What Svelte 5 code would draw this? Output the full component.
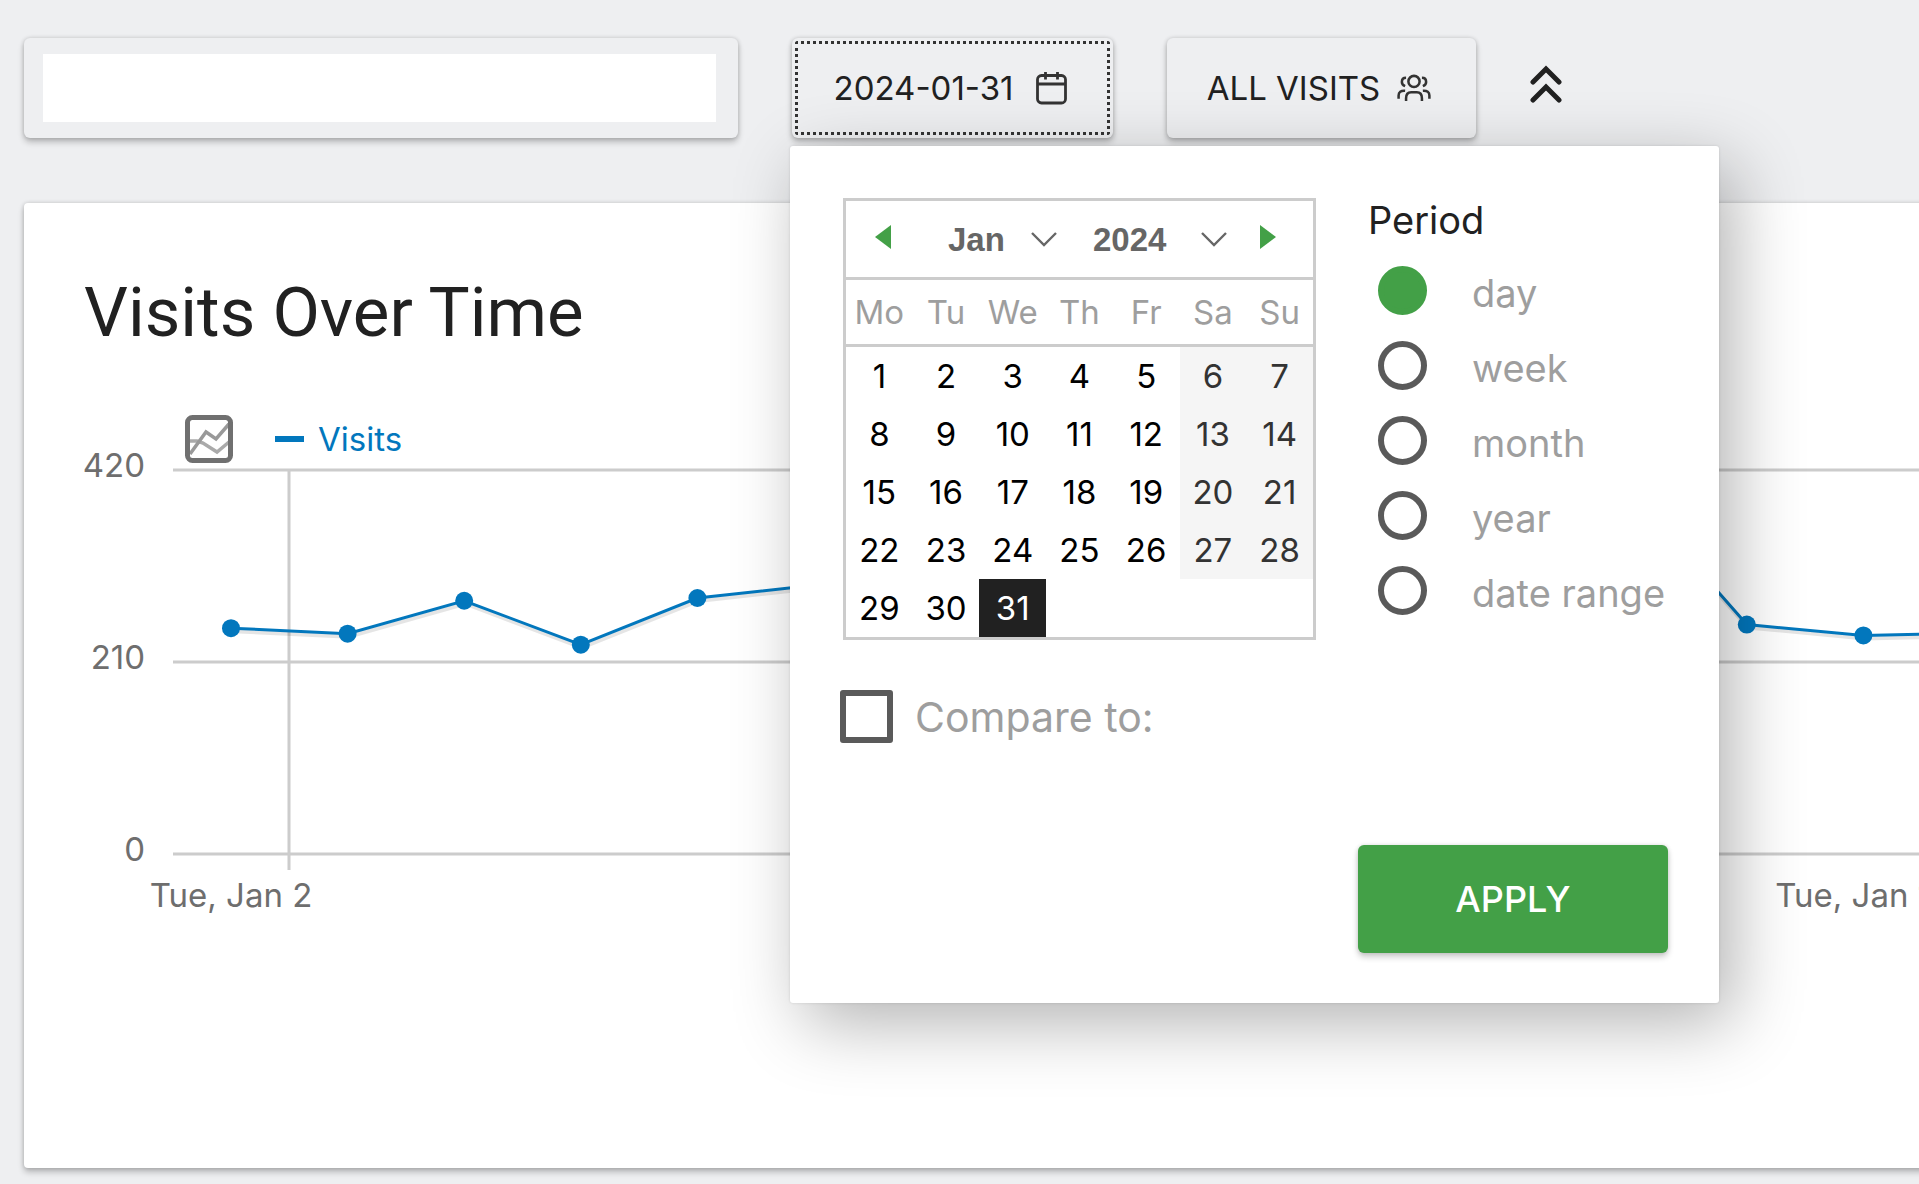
<script>
    let site = $state("")
    let month = $state("Jan")
    let year = $state("2024")
    let selected = $state(31)
    let period = $state("day")
    let compare = $state(false)

    const months = ["Jan", "Feb", "Mar", "Apr", "May", "Jun", "Jul", "Aug", "Sep", "Oct", "Nov", "Dec"]
    const years = ["2022", "2023", "2024"]
    const weekdays = ["Mo", "Tu", "We", "Th", "Fr", "Sa", "Su"]
    const weeks = [
        [1, 2, 3, 4, 5, 6, 7],
        [8, 9, 10, 11, 12, 13, 14],
        [15, 16, 17, 18, 19, 20, 21],
        [22, 23, 24, 25, 26, 27, 28],
        [29, 30, 31, null, null, null, null]
    ]
    const periods = ["day", "week", "month", "year", "date range"]

    const visits = [247, 241, 277, 229, 280, 294, 290, 300, 312, 305, 318, 330, 396, 251, 239, 242]
    const ticks = [420, 210, 0]
    const top = 30
    const plotHeight = 384
    const step = 1166 / 10

    const px = (i) => 147 + i * step
    const py = (v) => top + plotHeight - (v / 420) * plotHeight
    const line = visits.map((v, i) => px(i) + "," + py(v)).join(" ")
</script>

<main>
    <header>
        <div class="panel site">
            <input type="text" aria-label="Website" bind:value={site}>
        </div>

        <div class="picker">
            <button class="panel date">
                2024-01-31
                <svg width="34" height="34" viewBox="0 0 34 34" fill="none" stroke="#333" stroke-width="2.8">
                    <rect x="2.5" y="4.5" width="28" height="27.5" rx="4" />
                    <path d="M2.5 13h28M10.5 1v7.5M22.5 1v7.5" />
                </svg>
            </button>

            <div class="dropdown">
                <div class="columns">
                    <div class="calendar">
                        <div class="months">
                            <button class="arrow" aria-label="Previous month">
                                <svg width="16" height="24" viewBox="0 0 16 24"><path d="M16 0v24L0 12z" fill="#43a047" /></svg>
                            </button>
                            <select class="month" aria-label="Month" bind:value={month}>
                                {#each months as m}<option>{m}</option>{/each}
                            </select>
                            <select class="year" aria-label="Year" bind:value={year}>
                                {#each years as y}<option>{y}</option>{/each}
                            </select>
                            <button class="arrow" aria-label="Next month">
                                <svg width="16" height="24" viewBox="0 0 16 24"><path d="M0 0v24l16-12z" fill="#43a047" /></svg>
                            </button>
                        </div>
                        <table>
                            <thead>
                                <tr>
                                    {#each weekdays as day}<th>{day}</th>{/each}
                                </tr>
                            </thead>
                            <tbody>
                                {#each weeks as week}
                                    <tr>
                                        {#each week as day, i}
                                            <td class:weekend={day && i > 4} class:selected={day === selected}>
                                                {#if day}<button onclick={() => selected = day}>{day}</button>{/if}
                                            </td>
                                        {/each}
                                    </tr>
                                {/each}
                            </tbody>
                        </table>
                    </div>

                    <fieldset>
                        <legend>Period</legend>
                        {#each periods as p}
                            <label>
                                <input type="radio" name="period" value={p} bind:group={period}>
                                <span>{p}</span>
                            </label>
                        {/each}
                    </fieldset>
                </div>

                <label class="compare">
                    <input type="checkbox" bind:checked={compare}>
                    Compare to:
                </label>

                <button class="apply">APPLY</button>
            </div>
        </div>

        <button class="panel segment">
            ALL VISITS
            <svg width="34" height="28" viewBox="0 0 36 30" fill="none" stroke="#333" stroke-width="2.7">
                <circle cx="18" cy="8" r="6" />
                <path d="M9.5 29v-3q0-6.5 5.5-6.500h6q5.500 0 5.500 6.500v3" />
                <path d="M9.500 4q-4.500 0-4.500 4.500 0 3 3.500 4.500M26.500 4q4.500 0 4.500 4.500 0 3-3.500 4.500" />
                <path d="M8.500 18q-7-.5-7 5v3.500M27.500 18q7-.5 7 5v3.500" />
            </svg>
        </button>

        <button class="collapse" aria-label="Hide">
            <svg width="32" height="38" viewBox="0 0 32 38" fill="none" stroke="#212121" stroke-width="5" stroke-linecap="round">
                <path d="M3 17l13-13 13 13M3 35l13-13 13 13" />
            </svg>
        </button>
    </header>

    <section class="card">
        <h2>Visits Over Time</h2>

        <div class="legend">
            <button aria-label="Choose metrics">
                <svg width="48" height="48" viewBox="0 0 48 48" fill="none">
                    <path d="M5 26h7l6 2 14 9 12-10" stroke="#aaa" stroke-width="3.5" />
                    <path d="M5 39L21 17l10 7L44 9" stroke="#999" stroke-width="3.5" />
                    <rect x="2.5" y="2.5" width="43" height="43" rx="5" stroke="#707070" stroke-width="5" />
                </svg>
            </button>
            <i></i>
            <span>Visits</span>
        </div>

        <svg class="chart" width="100%" height="480">
            {#each ticks as t}
                <line class="grid" x1="89" x2="100%" y1={py(t)} y2={py(t)} />
                <text x="61" y={py(t) + 7} text-anchor="end">{t}</text>
            {/each}
            <line class="grid" x1="205" x2="205" y1={py(420)} y2={py(0) + 16} />
            <polyline class="shade" points={line} />
            <polyline class="visits" points={line} />
            {#each visits as v, i}
                <circle cx={px(i)} cy={py(v)} r="9" />
            {/each}
            <text x={px(0)} y="467" text-anchor="middle">Tue, Jan 2</text>
            <text x={px(14)} y="467" text-anchor="middle">Tue, Jan 16</text>
        </svg>
    </section>
</main>

<style>
    :global(body) {
        background: #eeeff1;
    }

    main {
        min-height: 100vh;
        box-sizing: border-box;
        padding: 38px 0 16px 24px;
        overflow: hidden;
        font-family: Inter, "Liberation Sans", sans-serif;
        font-size: 33px;
        color: #212121;
    }

    button, input, select {
        font: inherit;
        color: inherit;
        margin: 0;
        padding: 0;
        border: 0;
        background: none;
    }

    svg {
        display: block;
        flex-shrink: 0;
    }

    header {
        display: flex;
        gap: 54px;
        height: 100px;
        margin-bottom: 65px;
    }

    .panel {
        box-sizing: border-box;
        height: 100px;
        border-radius: 6px;
        background: #eeeff1;
        box-shadow: 0 4px 6px rgba(0,0,0,0.24), 0 0 4px rgba(0,0,0,0.16);
        display: flex;
        align-items: center;
        justify-content: center;
        white-space: nowrap;
    }

    .site {
        width: 714px;
        padding: 0 22px 0 19px;
    }

    .site input {
        width: 100%;
        height: 68px;
        background: #fff;
    }

    .picker {
        position: relative;
    }

    .date {
        width: 321px;
        padding-right: 2px;
        gap: 22px;
        outline: 3px dotted #333;
        outline-offset: -6px;
    }

    .segment {
        width: 309px;
        padding-right: 5px;
        gap: 17px;
    }

    .collapse {
        align-self: center;
        padding-bottom: 8px;
    }

    .dropdown {
        position: absolute;
        z-index: 2;
        top: 108px;
        left: -2px;
        box-sizing: border-box;
        width: 929px;
        padding: 52px 51px 50px 50px;
        background: #fff;
        border-radius: 3px;
        box-shadow: 14px 20px 70px rgba(0,0,0,0.3), 0 0 3px rgba(0,0,0,0.12);
    }

    .columns {
        display: flex;
        justify-content: space-between;
    }

    .calendar {
        box-sizing: border-box;
        width: 473px;
        margin-left: 3px;
        border: 3px solid #ccc;
    }

    .months {
        display: flex;
        align-items: center;
        height: 76px;
        padding: 0 35px 0 29px;
        border-bottom: 3px solid #ccc;
    }

    .arrow {
        padding-bottom: 4px;
    }

    select {
        appearance: none;
        height: 50px;
        font: bold 33px "Liberation Sans", Arial, sans-serif;
        color: #666;
        background: url("data:image/svg+xml,%3Csvg xmlns='http://www.w3.org/2000/svg' width='26' height='15' fill='none' stroke='%23666' stroke-width='2.4'%3E%3Cpath d='M1 1l12 12L25 1'/%3E%3C/svg%3E") no-repeat right center;
    }

    .month {
        width: 109px;
        margin-left: 57px;
    }

    .year {
        width: 134px;
        margin: 0 33px 0 36px;
    }

    table {
        width: 100%;
        table-layout: fixed;
        border-collapse: collapse;
    }

    th {
        height: 64px;
        padding: 0;
        font-weight: 400;
        color: #9e9e9e;
        border-bottom: 3px solid #ccc;
    }

    td {
        height: 58px;
        padding: 0;
        color: #000;
    }

    td button {
        display: block;
        width: 100%;
        height: 58px;
    }

    .weekend {
        color: #333;
        background: #f5f5f5;
    }

    .selected {
        color: #fff;
        background: #212121;
    }

    fieldset {
        width: 300px;
        margin: 0;
        padding: 0;
        border: 0;
    }

    legend {
        padding: 0;
        font-size: 38px;
        line-height: 44px;
        margin-bottom: 11px;
    }

    fieldset label {
        display: flex;
        align-items: center;
        gap: 45px;
        height: 75px;
        padding-left: 10px;
        font-size: 38px;
        color: #9e9e9e;
        white-space: nowrap;
    }

    fieldset span {
        padding-top: 5px;
    }

    input[type="radio"], input[type="checkbox"] {
        appearance: none;
        box-sizing: border-box;
        flex-shrink: 0;
        border: 6px solid #5a5a5a;
    }

    input[type="radio"] {
        width: 49px;
        height: 49px;
        border-radius: 50%;
    }

    input[type="radio"]:checked {
        border-color: #43a047;
        background: #43a047;
    }

    input[type="checkbox"] {
        width: 53px;
        height: 53px;
        border-radius: 3px;
    }

    .compare {
        display: flex;
        align-items: center;
        gap: 22px;
        margin-top: 50px;
        font-size: 41px;
        color: #9e9e9e;
    }

    .apply {
        display: block;
        width: 310px;
        height: 108px;
        margin: 102px 0 0 auto;
        border-radius: 6px;
        background: #43a047;
        box-shadow: 0 4px 6px rgba(0,0,0,0.2), 0 0 4px rgba(0,0,0,0.12);
        color: #fff;
        font-size: 36px;
        font-weight: 500;
    }

    .card {
        box-sizing: border-box;
        height: 965px;
        margin-right: -24px;
        padding: 66px 24px 0 60px;
        border-radius: 4px;
        background: #fff;
        box-shadow: 0 4px 6px rgba(0,0,0,0.24), 0 0 4px rgba(0,0,0,0.16);
    }

    h2 {
        margin: 0 0 58px;
        font-family: Roboto, Inter, sans-serif;
        font-size: 69px;
        font-weight: 400;
        line-height: 88px;
    }

    .legend {
        display: flex;
        align-items: center;
        height: 48px;
        padding-left: 101px;
        color: #0277bd;
    }

    .legend i {
        width: 29px;
        height: 6px;
        margin: 0 14px 0 42px;
        background: #0277bd;
    }

    .chart {
        margin-top: -23px;
    }

    .chart text {
        fill: #6e6e6e;
    }

    .grid {
        stroke: #ccc;
        stroke-width: 3;
    }

    .visits, .shade {
        fill: none;
        stroke: #0277bd;
        stroke-width: 3;
    }

    .shade {
        stroke: rgba(0,0,0,0.1);
        stroke-width: 4;
        transform: translate(1px, 3px);
    }

    .chart circle {
        fill: #0277bd;
    }
</style>
